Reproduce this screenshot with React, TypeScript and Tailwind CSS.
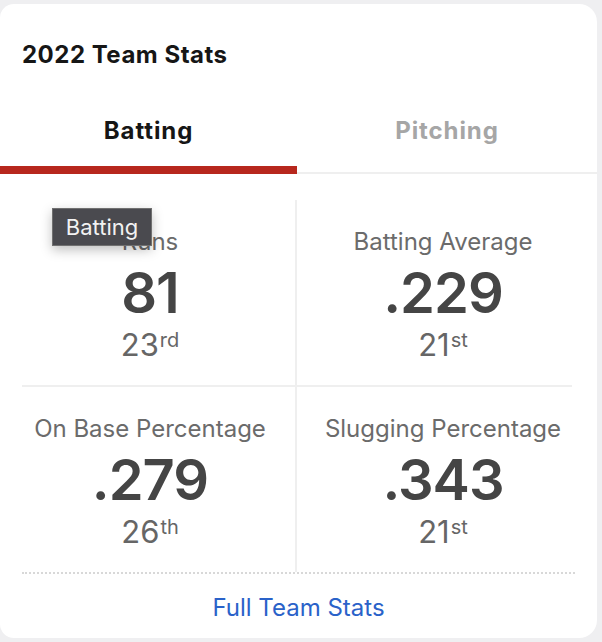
import React from 'react';

interface Stat {
  label: string;
  value: string;
  rank: string;
  suffix: string;
}

const topRow: Stat[] = [
  {label: 'Runs', value: '81', rank: '23', suffix: 'rd'},
  {label: 'Batting Average', value: '.229', rank: '21', suffix: 'st'},
];

const bottomRow: Stat[] = [
  {label: 'On Base Percentage', value: '.279', rank: '26', suffix: 'th'},
  {label: 'Slugging Percentage', value: '.343', rank: '21', suffix: 'st'},
];

function StatCell({stat, left}: {stat: Stat; left: boolean}) {
  return (
    <div
      className={`h-[185px] flex flex-col items-center pt-[25px] ${left ? 'border-r-2 border-[#efefef] pl-[5px]' : ''}`}
    >
      <div className="mt-[1px] text-[24px] leading-[32px] text-[#6b6b6b]">{stat.label}</div>
      <div className="mt-[2px] text-[56px] leading-[66px] font-semibold text-[#454545] tracking-[-1px]">{stat.value}</div>
      <div className="text-[31px] leading-[38px] text-[#666666]">
        {stat.rank}
        <sup className="text-[20px] relative -top-[9px] ml-[1px]">{stat.suffix}</sup>
      </div>
    </div>
  );
}

export default function App() {
  return (
    <div className="min-h-[642px] w-[602px] bg-[#efeff1] pt-[4px]" style={{fontFamily: 'Inter, "Noto Sans", sans-serif'}}>
      <div className="relative w-[597px] h-[634px] bg-white rounded-r-[18px] rounded-l-[14px] flex flex-col">
        <h2 className="px-[22px] pt-[37px] text-[24px] leading-[28px] font-bold tracking-[0.5px] text-[#161616]">2022 Team Stats</h2>

        <div className="mt-[31px] flex border-b-2 border-[#efefef]">
          <button className="w-[297px] h-[74px] flex items-center justify-center text-[24px] font-bold tracking-[0.9px] text-[#161616] border-b-8 border-[#b7271d] -mb-[2px] pb-[4px]">
            Batting
          </button>
          <button className="flex-1 h-[72px] flex items-center justify-center text-[24px] font-bold tracking-[0.9px] text-[#a6a6a6] pb-[10px]">
            Pitching
          </button>
        </div>

        <div className="mt-[26px] grid grid-cols-[297px_1fr] pr-[8px]">
          {topRow.map((s, i) => (
            <StatCell key={s.label} stat={s} left={i === 0} />
          ))}
          <div className="col-span-2 flex">
            <div className="ml-[22px] w-[273px] h-[2px] bg-[#efefef]" />
            <div className="w-[2px] h-[2px] bg-[#efefef]" />
            <div className="w-[275px] h-[2px] bg-[#efefef]" />
          </div>
          {bottomRow.map((s, i) => (
            <StatCell key={s.label} stat={s} left={i === 0} />
          ))}
        </div>

        <div className="mx-[22px] border-t-2 border-dotted border-[#d8d8d8]" />

        <div className="flex justify-center pt-[19px]">
          <a href="#" className="text-[24px] leading-[30px] text-[#2a62c9]">Full Team Stats</a>
        </div>

        <div className="absolute left-[52px] top-[204px] w-[100px] h-[38px] flex items-center justify-center bg-[#4a4a4f] border border-[#707070] text-[#f2f2f2] text-[22px] shadow-[0_4px_12px_rgba(0,0,0,0.25)]">
          Batting
        </div>
      </div>
    </div>
  );
}
